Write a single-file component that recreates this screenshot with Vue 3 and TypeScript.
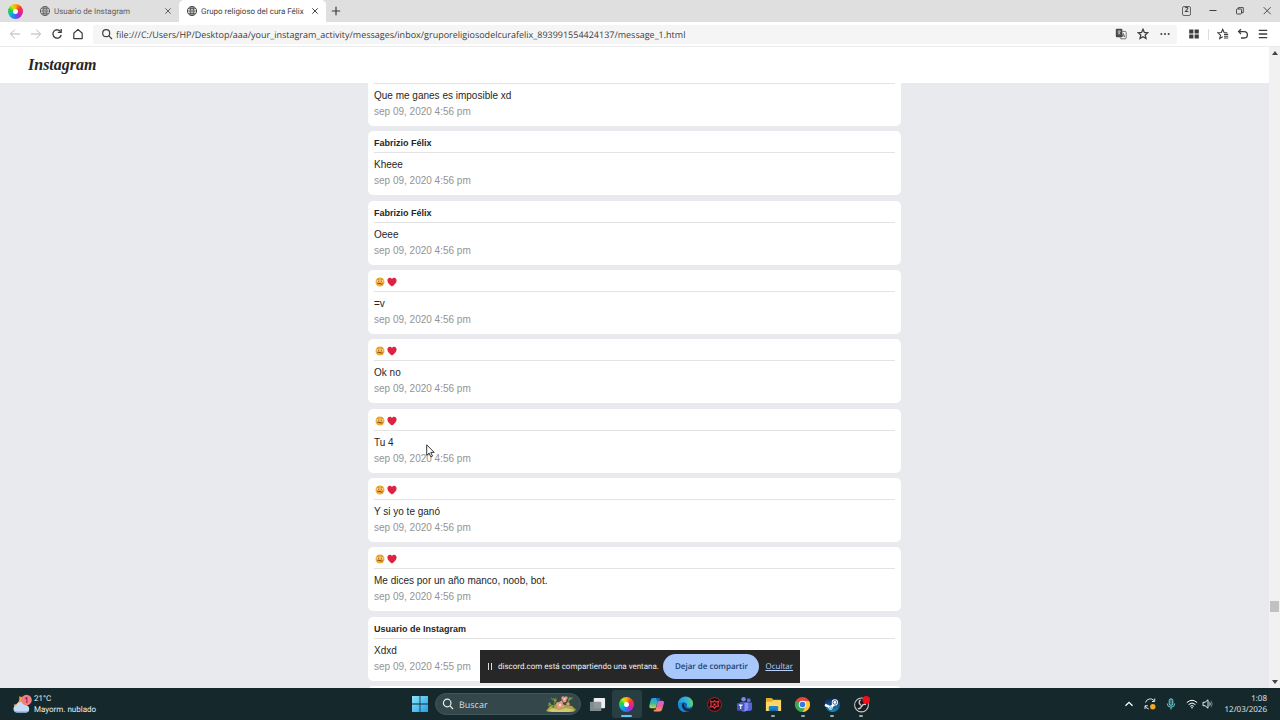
<script setup lang="ts">
import { ref } from 'vue'

interface Message {
  id: number
  sender: string
  text: string
  date: string
}

const address = ref('file:///C:/Users/HP/Desktop/aaa/your_instagram_activity/messages/inbox/gruporeligiosodelcurafelix_893991554424137/message_1.html')
const query = ref('')

const tabs = [
  { title: 'Usuario de Instagram', active: false },
  { title: 'Grupo religioso del cura Félix', active: true },
]

const stamp = 'sep 09, 2020 4:56 pm'
const messages: Message[] = [
  { id: 1, sender: 'Fabrizio Félix', text: 'Que me ganes es imposible xd', date: stamp },
  { id: 2, sender: 'Fabrizio Félix', text: 'Kheee', date: stamp },
  { id: 3, sender: 'Fabrizio Félix', text: 'Oeee', date: stamp },
  { id: 4, sender: '', text: '=v', date: stamp },
  { id: 5, sender: '', text: 'Ok no', date: stamp },
  { id: 6, sender: '', text: 'Tu 4', date: stamp },
  { id: 7, sender: '', text: 'Y si yo te ganó', date: stamp },
  { id: 8, sender: '', text: 'Me dices por un año manco, noob, bot.', date: stamp },
  { id: 9, sender: 'Usuario de Instagram', text: 'Xdxd', date: 'sep 09, 2020 4:55 pm' },
  { id: 10, sender: '', text: '', date: '' },
]
</script>

<template>
  <div class="screen">
    <header class="tabbar">
      <span class="swirl" aria-hidden="true"></span>
      <nav class="tabs">
        <div v-for="tab in tabs" :key="tab.title" class="tab" :class="{ active: tab.active }">
          <svg class="globe" viewBox="0 0 12 12" fill="none" stroke="currentColor">
            <circle cx="6" cy="6" r="4.6" />
            <ellipse cx="6" cy="6" rx="2" ry="4.6" />
            <path d="M1.4 6h9.2M6 1.4v9.2M2.2 3.6h7.6M2.2 8.4h7.6" stroke-width=".7" />
          </svg>
          <button class="tab-title" type="button">{{ tab.title }}</button>
          <button class="tab-close" type="button" aria-label="Cerrar pestaña">
            <svg viewBox="0 0 8 8" fill="none" stroke="currentColor"><path d="M1.3 1.3l5.4 5.4M6.7 1.3L1.3 6.7" /></svg>
          </button>
        </div>
      </nav>
      <button class="new-tab" type="button" aria-label="Nueva pestaña">
        <svg viewBox="0 0 10 10" fill="none" stroke="currentColor" stroke-width="1.2"><path d="M5 .8v8.4M.8 5h8.4" /></svg>
      </button>
      <div class="window-controls">
        <button type="button" class="count">2</button>
        <button type="button" aria-label="Minimizar">
          <svg viewBox="0 0 10 10" fill="none" stroke="currentColor"><path d="M1.5 4.5h7" /></svg>
        </button>
        <button type="button" aria-label="Restaurar">
          <svg viewBox="0 0 10 10" fill="none" stroke="currentColor" stroke-width=".9">
            <rect x="1.5" y="3" width="5" height="5" rx=".7" /><path d="M3.3 3V1.6h5v5H6.6" />
          </svg>
        </button>
        <button type="button" aria-label="Cerrar">
          <svg viewBox="0 0 10 10" fill="none" stroke="currentColor" stroke-width=".9"><path d="M1.7 1.2l7 7M8.7 1.2l-7 7" /></svg>
        </button>
      </div>
    </header>

    <div class="toolbar">
      <div class="nav-buttons">
        <button type="button" class="faded" aria-label="Atrás">
          <svg viewBox="0 0 12 12" fill="none" stroke="currentColor"><path d="M11 6H1.6M5.8 1.6L1.4 6l4.4 4.4" /></svg>
        </button>
        <button type="button" class="faded" aria-label="Adelante">
          <svg viewBox="0 0 12 12" fill="none" stroke="currentColor"><path d="M1 6h9.4M6.2 1.6L10.6 6l-4.4 4.4" /></svg>
        </button>
        <button type="button" aria-label="Recargar">
          <svg viewBox="0 0 12 12" fill="none" stroke="currentColor" stroke-width="1.3">
            <path d="M9.6 3.6A4.2 4.2 0 1 0 10.2 7" /><path d="M10.2 1v3.3H6.8" />
          </svg>
        </button>
        <button type="button" aria-label="Inicio">
          <svg viewBox="0 0 12 12" fill="none" stroke="currentColor" stroke-width="1.2" stroke-linejoin="round">
            <path d="M1.8 5.2L6 1.4l4.2 3.8v5.4H1.8z" />
          </svg>
        </button>
      </div>
      <div class="address">
        <svg viewBox="0 0 12 12" fill="none" stroke="currentColor" stroke-width="1.2"><circle cx="5.2" cy="5.2" r="3.5" /><path d="M7.8 7.8l3.2 3.2" /></svg>
        <input v-model="address" type="text" aria-label="Dirección" />
        <button type="button" aria-label="Traducir">
          <svg viewBox="0 0 12 12">
            <rect x=".8" y=".8" width="6.6" height="8.4" rx="1" fill="#4a4a4a" />
            <path d="M2.6 3.2h3M4.1 2.4v.8M3 6.4c1-.6 1.8-1.6 2.1-3M3 4.2c.5.9 1.2 1.6 2.2 2.1" stroke="#fff" stroke-width=".6" fill="none" />
            <path d="M7.4 3.4h2.8a1 1 0 0 1 1 1v5.4a1 1 0 0 1-1 1H5.8l-.8-1.6" fill="none" stroke="#555" stroke-width=".8" />
            <path d="M6.8 9.2l1.5-3.7 1.5 3.7M7.3 8h2" fill="none" stroke="#555" stroke-width=".8" />
          </svg>
        </button>
        <button type="button" aria-label="Favorito">
          <svg viewBox="0 0 12 12" fill="none" stroke="currentColor" stroke-width="1.3"><path d="M6 1.3l1.4 3.2 3.4.3-2.6 2.3.8 3.4L6 8.7l-3 1.8.8-3.4L1.2 4.8l3.4-.3z" /></svg>
        </button>
        <button type="button" aria-label="Más">
          <svg viewBox="0 0 12 12" fill="currentColor"><circle cx="2.4" cy="6" r="1" /><circle cx="6" cy="6" r="1" /><circle cx="9.6" cy="6" r="1" /></svg>
        </button>
      </div>
      <div class="tools">
        <button type="button" aria-label="Extensiones">
          <svg viewBox="0 0 12 12" fill="currentColor"><path d="M1.2 1.5h4.2v4H1.2zM6.6 1.5h4.2v4H6.6zM1.2 6.6h4.2v4H1.2zM6.6 6.6h4.2v4H6.6z" /></svg>
        </button>
        <span class="divider"></span>
        <button type="button" aria-label="Lista de favoritos">
          <svg viewBox="0 0 12 12" fill="none" stroke="currentColor" stroke-width="1.1"><path d="M10.3 4.7l-3.2-.2L5.7 1.4 4.3 4.5l-3.4.3 2.6 2.3-.8 3.4 3-1.8M7 6.4h4.2M7 8.2h4.2M7 10h4.2" /></svg>
        </button>
        <button type="button" aria-label="Deshacer">
          <svg viewBox="0 0 12 12" fill="none" stroke="currentColor" stroke-width="1.3"><path d="M4 1.2L1.6 3.6 4 6M1.8 3.6h5.4a3 3 0 0 1 0 6.4H4" /></svg>
        </button>
        <button type="button" aria-label="Menú">
          <svg viewBox="0 0 12 12" fill="none" stroke="currentColor" stroke-width="1.3"><path d="M1.8 2.3h8.4M1.8 6h8.4M1.8 9.7h8.4" /></svg>
        </button>
      </div>
    </div>

    <div class="viewport">
      <div class="page">
        <div class="brand"><h1>Instagram</h1></div>
        <main class="feed">
          <article v-for="m in messages" :key="m.id" class="card">
            <h2>
              <template v-if="m.sender">{{ m.sender }}</template>
              <span v-else class="emoji" role="img" aria-label="Cara y corazón">
                <svg viewBox="0 0 10 10">
                  <circle cx="5" cy="5" r="4.5" fill="#f2ae35" />
                  <ellipse cx="3.2" cy="4" rx="1.2" ry="1" fill="#fff0cb" /><ellipse cx="6.8" cy="4" rx="1.2" ry="1" fill="#fff0cb" />
                  <circle cx="3.4" cy="4.1" r=".6" fill="#63401b" /><circle cx="6.6" cy="4.1" r=".6" fill="#63401b" />
                  <path d="M2.5 6.7q1.3-.9 2.5 0t2.5-.1" stroke="#7c431d" stroke-width="1" fill="none" />
                  <path d="M2 2.4l1.8-.6M6.2 1.8l1.8.6" stroke="#a76820" stroke-width=".6" />
                </svg>
                <svg viewBox="0 0 10 10"><path d="M5 9.4C2.6 7.8.4 5.8.4 3.4.4.6 3.8-.1 5 2.1 6.2-.1 9.6.6 9.6 3.4 9.6 5.8 7.4 7.8 5 9.4z" fill="#dc2341" /></svg>
              </span>
            </h2>
            <p>{{ m.text }}</p>
            <time>{{ m.date }}</time>
          </article>
        </main>
      </div>
      <div class="scrollbar" aria-hidden="true">
        <svg viewBox="0 0 6 4"><path d="M0 4l3-4 3 4z" fill="#444" /></svg>
        <div class="track"><span class="thumb"></span></div>
        <svg viewBox="0 0 6 4"><path d="M0 0l3 4 3-4z" fill="#444" /></svg>
      </div>

      <div class="share" role="status">
        <span class="pause"></span>
        <span class="share-text">discord.com está compartiendo una ventana.</span>
        <button type="button">Dejar de compartir</button>
        <a href="#">Ocultar</a>
      </div>
      <svg class="cursor" viewBox="0 0 9 14"><path d="M.7.8v10.5l2.4-2.2 1.7 3.8 1.7-.8-1.7-3.7h3.4z" fill="#fff" stroke="#222" stroke-width=".9" /></svg>
    </div>

    <footer class="taskbar">
      <button class="weather" type="button">
        <svg viewBox="0 0 20 20">
          <path d="M7 2.5a6 6 0 1 1-5.4 8.2A6 6 0 0 0 7 2.5z" fill="#e9a53a" />
          <path d="M4.8 18.5a3.7 3.7 0 0 1-.4-7.3 5 5 0 0 1 9.1-.3 3.9 3.9 0 0 1 1 7.6z" fill="#c4dcf8" />
          <path d="M2.3 16.5q1 2 2.6 2h9.5q1.8 0 3-2-2 .9-4 .7H5.500q-2 0-3.200-.7z" fill="#8fb5ea" />
          <circle cx="14.500" cy="6" r="5.300" fill="#f27c88" />
          <text x="14.500" y="8.800" text-anchor="middle" font-size="8" fill="#26151a">1</text>
        </svg>
        <span>21°C<br />Mayorm. nublado</span>
      </button>

      <div class="center">
        <button class="start" type="button" aria-label="Inicio">
          <svg viewBox="0 0 16 16">
            <defs><linearGradient id="win" x1="0" y1="0" x2="1" y2="1"><stop stop-color="#8fe3fb" /><stop offset="1" stop-color="#1fa0e8" /></linearGradient></defs>
            <path d="M0 0h7.600v7.600H0zM8.400 0H16v7.600H8.400zM0 8.400h7.600V16H0zM8.400 8.400H16V16H8.400z" fill="url(#win)" />
          </svg>
        </button>
        <label class="search">
          <svg viewBox="0 0 12 12" fill="none" stroke="#e8eeee" stroke-width="1.200"><circle cx="5.200" cy="5" r="3.800" /><path d="M8 7.800l3 3.200" /></svg>
          <input v-model="query" type="text" placeholder="Buscar" aria-label="Buscar" />
          <svg class="flowers" viewBox="0 0 30 18">
            <path d="M0 16l4-5 7-2 9 1 6 1 4 4-3 2H3z" fill="#a7a747" />
            <path d="M2 15l5-2 6 2 7-2 8 2-5 2H6z" fill="#d5c773" />
            <path d="M7 13L10 3M10 7L5 3M14 10l3-8M21 11l2-7 4-1M5 11L3 8" stroke="#5d7b37" stroke-width="1.500" fill="none" />
            <path d="M9 8L7 3l4 2zM22 7l1-5 3 1zM2 11l1-4 3 3z" fill="#719746" />
            <g fill="#e99984">
              <circle cx="12" cy="9" r="2" /><circle cx="15" cy="8" r="2" /><circle cx="13" cy="12" r="2" /><circle cx="16" cy="11" r="2" />
              <circle cx="17" cy="3" r="1.700" /><circle cx="20" cy="3" r="1.700" /><circle cx="18.500" cy="5.500" r="2" /><circle cx="22" cy="9" r="1.800" />
            </g>
            <circle cx="14" cy="10" r="1.200" fill="#ffe1bc" /><circle cx="18.500" cy="4" r=".9" fill="#ffe1bc" />
          </svg>
        </label>
        <nav class="apps">
          <button type="button" aria-label="Vista de tareas">
            <svg viewBox="0 0 18 18"><rect x="5" y="2" width="12" height="11" rx="1" fill="#eceeef" /><rect x="1" y="6" width="12" height="10" rx="1" fill="#899295" opacity=".93" /></svg>
          </button>
          <button type="button" class="current" aria-label="Navegador"><span class="swirl"></span></button>
          <button type="button" aria-label="Copilot">
            <svg viewBox="0 0 18 18">
              <defs>
                <linearGradient id="cpa" x1="0" y1="0" x2="0" y2="1"><stop stop-color="#249ce6" /><stop offset=".55" stop-color="#35ba9c" /><stop offset="1" stop-color="#e9d43b" /></linearGradient>
                <linearGradient id="cpb" x1="0" y1="0" x2="0" y2="1"><stop stop-color="#b66aed" /><stop offset=".5" stop-color="#ed609d" /><stop offset="1" stop-color="#f69d4f" /></linearGradient>
              </defs>
              <path d="M5 2h6q1.500 0 2 2l-2.500 1L8 13H4q-3 0-2.600-3L3 4q.500-2 2-2z" fill="url(#cpa)" />
              <path d="M11 5h4q2.500 0 1.800 3L15 14q-.600 2.500-3 2.500H7q-1.500 0-1-2h2l2-8z" fill="url(#cpb)" />
              <path d="M8.500 2H11q1.500 0 2 2l-3.500 1z" fill="#205cc9" />
            </svg>
          </button>
          <button type="button" aria-label="Edge">
            <svg viewBox="0 0 18 18">
              <defs><linearGradient id="edge" x1="0" y1="0" x2="1" y2="0"><stop stop-color="#2197df" /><stop offset=".6" stop-color="#32b7d9" /><stop offset="1" stop-color="#63d45c" /></linearGradient></defs>
              <circle cx="9" cy="9" r="8" fill="#0f62b5" />
              <path d="M1 9a8 8 0 0 1 16-1c.200 3-2 4.200-4.500 4.200-2 0-2.500-.800-2-1.700.700-1.300.100-3.500-2.500-3.700C4.800 6.600 2 7.500 1 9z" fill="url(#edge)" />
              <path d="M8 7c-2.800.500-3.400 3.500-2 6 1.400 2.300 4 3.500 7 2.700 1.200-.4 2.200-1.300 3-2.600-4 1.700-7.500 0-8.400-2.600C7 9 7.400 7.800 8 7z" fill="#172a35" />
              <path d="M5.500 8c-1 3 .2 6.500 4.500 8.800C5 17.500 1 14 1 9c1-1.200 3-1.600 4.500-1z" fill="#1689d8" />
            </svg>
          </button>
          <button type="button" aria-label="Juegos">
            <svg viewBox="0 0 18 18">
              <circle cx="9" cy="9" r="7.300" fill="#16080b" stroke="#a92730" stroke-width="1" />
              <path d="M5 5.500l2.500 1L9 5l1.500 1.500 3-1-1 3 1 2-3 .5-1.500 2-1.500-2-3 .5 1-2.500z" fill="none" stroke="#e1313c" stroke-width="1.300" /><circle cx="9" cy="9" r="1.300" fill="#e1313c" />
            </svg>
          </button>
          <button type="button" aria-label="Teams">
            <svg viewBox="0 0 18 18">
              <circle cx="8" cy="3.500" r="2.400" fill="#7d88ef" /><circle cx="13.500" cy="4.500" r="2" fill="#6670d4" />
              <path d="M11 7h6v6q0 3-3 3h-3z" fill="#5962cd" /><path d="M4 7h9v5.500q-.500 4-4.500 4T4 13z" fill="#858ff5" />
              <rect x="1" y="7.500" width="8" height="8" rx="1.200" fill="#4751bd" /><path d="M3 9.700h4M5 9.700v4" stroke="#fff" stroke-width="1.200" />
            </svg>
          </button>
          <button type="button" class="open" aria-label="Explorador de archivos">
            <svg viewBox="0 0 18 18"><path d="M1 2h6l2 2h8v12H1z" fill="#e9aa2c" /><path d="M1 6h6l2-1.500h8V16H1z" fill="#ffd667" /><path d="M4 16v-4q0-1.500 1.500-1.500h7q1.500 0 1.500 1.500v4z" fill="#2284c8" /><path d="M6 16v-2h6v2z" fill="#1669a9" /></svg>
          </button>
          <button type="button" class="open" aria-label="Chrome">
            <svg viewBox="0 0 18 18">
              <circle cx="9" cy="9" r="8" fill="#e9443b" /><path d="M9 9L2.100 5A8 8 0 0 0 9 17l3.500-6z" fill="#35a853" /><path d="M9 5.200h7A8 8 0 0 1 9 17l3.400-6z" fill="#fcc934" />
              <circle cx="9" cy="9" r="4" fill="#fff" /><circle cx="9" cy="9" r="3" fill="#3678e5" />
            </svg>
          </button>
          <button type="button" class="open" aria-label="Steam">
            <svg viewBox="0 0 18 18">
              <defs><linearGradient id="steam" x1="0" y1="0" x2="0" y2="1"><stop stop-color="#101d49" /><stop offset="1" stop-color="#1688c1" /></linearGradient></defs>
              <circle cx="9" cy="9" r="8" fill="url(#steam)" /><path d="M1 9.500l6 2.500 4-3.500" stroke="#fff" stroke-width="2.600" fill="none" />
              <circle cx="11.500" cy="6.800" r="3.300" fill="#fff" /><circle cx="11.500" cy="6.800" r="2" fill="none" stroke="#17376c" stroke-width=".8" /><circle cx="7" cy="12.500" r="2.200" fill="#fff" /><circle cx="7" cy="12.500" r="1.200" fill="none" stroke="#1774ae" stroke-width=".6" />
            </svg>
          </button>
          <button type="button" class="open" aria-label="OBS">
            <svg viewBox="0 0 18 18">
              <circle cx="9" cy="9.500" r="7.300" fill="#1b1b20" stroke="#c9cdce" stroke-width="1.100" />
              <path d="M8 4c-2 1.500-2 4 .200 5.500M13.800 9c-2.300-.800-4.300.300-4.600 2.400M5 13.300c2.400.400 4.300-1.200 3.800-3.600" fill="none" stroke="#c9cdce" stroke-width="1.500" />
              <circle cx="14" cy="4" r="4" fill="#f20d18" />
            </svg>
          </button>
        </nav>
      </div>

      <div class="tray">
        <button type="button" aria-label="Iconos ocultos"><svg viewBox="0 0 12 12" fill="none" stroke="#fff" stroke-width="1.300"><path d="M2.500 7.800L6 4.300l3.500 3.500" /></svg></button>
        <button type="button" aria-label="Actualización"><svg viewBox="0 0 12 12" fill="none" stroke="#dce6e6" stroke-width="1"><path d="M1.500 4.500A5 5 0 0 1 10 2.500M10.700.5v3H8M1 11V7.800h3M1.200 8a5 5 0 0 0 3.600 3" /><circle cx="8.800" cy="8.800" r="2.700" fill="#f5a623" stroke="none" /></svg></button>
        <button type="button" aria-label="Micrófono"><svg viewBox="0 0 12 12" fill="none" stroke="#77cfd4" stroke-width="1"><rect x="4.200" y=".8" width="3.600" height="6.600" rx="1.800" fill="#2d6970" /><path d="M2.300 5.500q0 3.700 3.700 3.700t3.700-3.700M6 9.200v2.300" /></svg></button>
        <button class="status" type="button" aria-label="Red y volumen">
          <svg viewBox="0 0 12 12" fill="none" stroke="#fff" stroke-width="1"><path d="M.8 4.600q5.200-4.600 10.400 0M2.600 6.500q3.400-3 6.800 0M4.300 8.300q1.700-1.500 3.400 0" /><circle cx="6" cy="9.700" r=".8" fill="#fff" stroke="none" /></svg>
          <svg viewBox="0 0 12 12" fill="none" stroke="#fff" stroke-width=".9"><path d="M1 4.300h2L6 1.800v8.400L3 7.700H1z" /><path d="M7.600 4.300q1.200 1.700 0 3.400" /><path d="M9 2.800q2.400 3.200 0 6.400" stroke="#7d8c8e" /></svg>
        </button>
        <button class="clock" type="button">1:08<br />12/03/2026</button>
      </div>
    </footer>
  </div>
</template>

<style>
body {
  margin: 0;
}
</style>

<style scoped>
* {
  box-sizing: border-box;
}

.screen {
  display: flex;
  flex-direction: column;
  height: 100vh;
  overflow: hidden;
  background: #e9eaed;
  color: #3d3d3d;
  font-family: "Open Sans", "Noto Sans", sans-serif;
  font-size: 9px;
  text-rendering: geometricPrecision;
}

button,
input {
  margin: 0;
  padding: 0;
  border: 0;
  background: none;
  color: inherit;
  font: inherit;
  outline: none;
  text-rendering: inherit;
}

button {
  display: flex;
  align-items: center;
  justify-content: center;
  white-space: nowrap;
}

svg {
  display: block;
  flex: none;
  width: 12px;
  height: 12px;
}

.swirl {
  flex: none;
  width: 15px;
  height: 15px;
  border-radius: 50%;
  background: radial-gradient(circle, #fff 0 2px, transparent 3px),
    conic-gradient(#ffb000, #f43b2f 14%, #e91e8f 28%, #8c35ed 42%, #168cf0 57%, #06bfc2 68%, #29d52c 80%, #c5e51b 90%, #ffb000);
}

/* Tabs */
.tabbar {
  display: flex;
  flex: none;
  align-items: center;
  height: 22px;
  padding-left: 8px;
  background: #dfdfdf;
}

.tabs {
  display: flex;
  align-self: stretch;
  margin-left: 9px;
}

.tab {
  display: flex;
  align-items: center;
  width: 147px;
  padding: 0 7px;
  color: #606060;
}

.tab.active {
  border-radius: 5px 5px 0 0;
  background: #fff;
  color: #454545;
}

.tab-title {
  flex: 1;
  justify-content: flex-start;
  margin-left: 3px;
  font-family: Roboto, sans-serif;
  font-size: 8px;
}

.tab-close svg {
  width: 8px;
  height: 8px;
}

.new-tab {
  margin-left: 5px;
}

.new-tab svg,
.window-controls svg {
  width: 10px;
  height: 10px;
}

.window-controls {
  display: flex;
  align-items: center;
  gap: 17px;
  margin-left: auto;
  padding-right: 8px;
}

.window-controls .count {
  width: 9px;
  height: 10px;
  border: 1px solid #666;
  border-radius: 2px;
  font-size: 7px;
  font-weight: 700;
  line-height: 8px;
}

/* Toolbar */
.toolbar {
  display: flex;
  flex: none;
  align-items: center;
  height: 25px;
  border-bottom: 1px solid #ebebeb;
  background: #fff;
}

.nav-buttons {
  display: flex;
  gap: 9px;
  width: 93px;
  padding-left: 9px;
}

.faded {
  color: #b5b5b5;
}

.address {
  display: flex;
  flex: 1;
  align-items: center;
  gap: 10px;
  height: 19px;
  padding: 0 6px 0 8px;
  border-radius: 3px;
  background: #f5f5f5;
}

.address input {
  flex: 1;
  min-width: 0;
  margin-left: -7px;
  font-size: 9px;
}

.tools {
  display: flex;
  align-items: center;
  gap: 8px;
  padding: 0 11px;
}

.divider {
  width: 1px;
  height: 11px;
  background: #ddd;
}

/* Web page */
.viewport {
  position: relative;
  display: flex;
  flex: 1;
  min-height: 0;
}

.page {
  display: flex;
  flex: 1;
  flex-direction: column;
  min-width: 0;
  overflow: hidden;
  color: #262626;
  font-family: "Liberation Sans", Arial, sans-serif;
  text-rendering: auto;
}

.brand {
  flex: none;
  height: 36px;
  padding: 6px 28px;
  background: #fff;
}

.brand h1 {
  margin: 0;
  font-family: "Liberation Serif", serif;
  font-size: 16px;
  font-style: italic;
  font-weight: 700;
  line-height: 24px;
}

.feed {
  display: flex;
  flex: 1;
  flex-direction: column;
  gap: 5px;
  width: 42%;
  min-height: 0;
  margin: 0 auto;
  clip-path: inset(0);
}

.card {
  flex: none;
  height: 64px;
  padding: 5px 6px;
  border-radius: 5px;
  background: #fff;
}

.card:first-child {
  margin-top: -21px;
}

.card:nth-child(3n + 2) {
  margin-bottom: 1px;
}

.card h2 {
  height: 17px;
  margin: 0 0 4px;
  border-bottom: 1px solid #e3e3e3;
  font-size: 9px;
  line-height: 14px;
}

.card p,
.card time {
  display: block;
  margin: 0;
  font-size: 10px;
  line-height: 16px;
}

.card time {
  color: #949494;
}

.emoji {
  display: flex;
  align-items: center;
  gap: 2px;
  height: 14px;
  padding-left: 1px;
}

.emoji svg {
  width: 10px;
  height: 10px;
}

.scrollbar {
  display: flex;
  flex: none;
  flex-direction: column;
  align-items: center;
  width: 11px;
  padding: 4px 0;
  background: #f1f1f1;
}

.scrollbar svg {
  width: 6px;
  height: 4px;
}

.track {
  display: flex;
  flex: 1;
  flex-direction: column;
  justify-content: flex-end;
  padding-bottom: 68px;
}

.thumb {
  width: 9px;
  height: 11px;
  background: #c1c1c1;
}

.share {
  position: absolute;
  bottom: 5px;
  left: 50%;
  display: flex;
  align-items: center;
  width: 320px;
  height: 33px;
  padding: 0 7px 0 8px;
  transform: translateX(-50%);
  background: #272727;
  color: #eee;
  white-space: nowrap;
}

.pause {
  width: 4px;
  height: 7px;
  margin-right: 6px;
  border: solid #ddd;
  border-width: 0 1px;
}

.share-text {
  flex: 1;
  font-family: Roboto, sans-serif;
  font-size: 8px;
}

.share button {
  flex: none;
  width: 96px;
  height: 25px;
  margin-right: 6px;
  border-radius: 13px;
  background: #a8c7fa;
  color: #173f70;
  font-size: 8px;
  font-weight: 600;
}

.share a {
  color: #b9d2f8;
  font-size: 8px;
}

.cursor {
  position: absolute;
  top: 397px;
  left: 426px;
  width: 9px;
  height: 14px;
}

/* Taskbar */
.taskbar {
  display: grid;
  flex: none;
  grid-template-columns: 1fr auto 1fr;
  align-items: center;
  height: 32px;
  background: #15292d;
  color: #e7eded;
}

.weather {
  justify-self: start;
  gap: 2px;
  padding-left: 12px;
  font-family: Roboto, sans-serif;
  font-size: 8px;
  line-height: 11px;
  text-align: left;
}

.weather svg {
  width: 20px;
  height: 20px;
}

.center {
  display: flex;
  align-items: center;
}

.start {
  width: 31px;
}

.start svg {
  width: 16px;
  height: 16px;
}

.search {
  display: flex;
  align-items: center;
  width: 146px;
  height: 22px;
  padding: 0 4px 0 6px;
  border: 1px solid #40565a;
  border-radius: 11px;
  background: #34484c;
}

.search input {
  flex: 1;
  min-width: 0;
  margin-left: 5px;
}

.search input::placeholder {
  color: #d5dddd;
  opacity: 1;
}

.search .flowers {
  width: 30px;
  height: 18px;
}

.apps {
  display: grid;
  grid-template-columns: repeat(10, 1fr);
  width: 293px;
  margin-left: 2px;
}

.apps button {
  position: relative;
  height: 28px;
}

.apps svg {
  width: 17px;
  height: 17px;
}

.apps .current {
  border-radius: 3px;
  background: #293e42;
}

.apps .open::after,
.apps .current::after {
  position: absolute;
  bottom: 1px;
  width: 4px;
  height: 2px;
  border-radius: 1px;
  background: #9eabac;
  content: "";
}

.apps .current::after {
  width: 11px;
  background: #62c5f2;
}

.tray {
  display: flex;
  align-items: center;
  justify-self: end;
  gap: 9px;
  padding-right: 13px;
}

.status {
  gap: 4px;
}

.clock {
  margin-left: 2px;
  font-size: 8px;
  line-height: 11px;
  text-align: right;
}
</style>
